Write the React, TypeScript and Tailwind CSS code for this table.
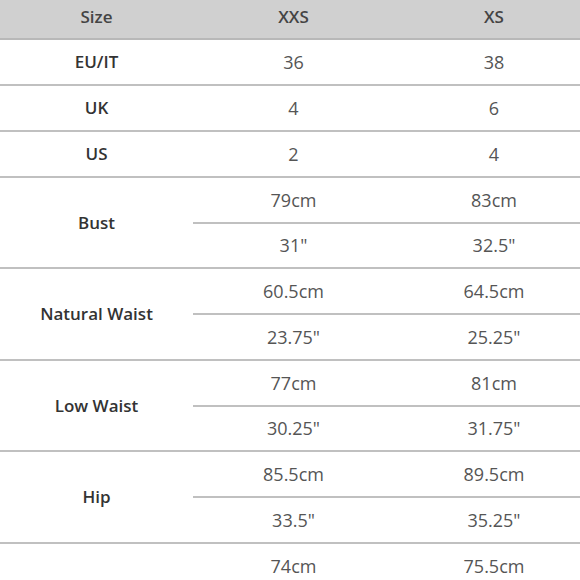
const simpleRows = [
  { label: "EU/IT", xxs: "36", xs: "38" },
  { label: "UK", xxs: "4", xs: "6" },
  { label: "US", xxs: "2", xs: "4" },
];

const measureRows = [
  { label: "Bust", xxs: ["79cm", '31"'], xs: ["83cm", '32.5"'] },
  { label: "Natural Waist", xxs: ["60.5cm", '23.75"'], xs: ["64.5cm", '25.25"'] },
  { label: "Low Waist", xxs: ["77cm", '30.25"'], xs: ["81cm", '31.75"'] },
  { label: "Hip", xxs: ["85.5cm", '33.5"'], xs: ["89.5cm", '35.25"'] },
  { label: "Thigh", xxs: ["74cm", '29"'], xs: ["75.5cm", '29.75"'] },
];

const font = { fontFamily: '"Open Sans", "Liberation Sans", sans-serif' };

export default function App() {
  return (
    <div className="h-[580px] w-[580px] overflow-hidden bg-white" style={font}>
      <div className="w-[594px]">
        {/* Header */}
        <div className="flex h-[40px] items-center border-b-2 border-[#b8b8b8] bg-[#d0d0d0] pb-[4px] text-[17px] font-semibold text-[#444]">
          <div className="w-[193px] text-center">Size</div>
          <div className="w-[201px] text-center">XXS</div>
          <div className="w-[200px] text-center">XS</div>
        </div>

        {simpleRows.map((r) => (
          <div
            key={r.label}
            className="flex h-[46px] items-center border-b-2 border-[#c0c0c0]"
          >
            <div className="w-[193px] text-center text-[17px] font-semibold text-[#333]">{r.label}</div>
            <div className="w-[201px] text-center text-[18px] text-[#555]">{r.xxs}</div>
            <div className="w-[200px] text-center text-[18px] text-[#555]">{r.xs}</div>
          </div>
        ))}

        {measureRows.map((r, i) => (
          <div key={r.label} className="flex border-b-2 border-[#c0c0c0]">
            <div className="flex w-[193px] items-center justify-center text-[17px] font-semibold text-[#333]">
              {r.label}
            </div>
            <div className="flex flex-col text-[18px] text-[#555]">
              <div className="flex h-[46px] items-center border-b-2 border-[#c0c0c0]">
                <div className="w-[201px] text-center">{r.xxs[0]}</div>
                <div className="w-[200px] text-center">{r.xs[0]}</div>
              </div>
              <div className={i % 2 === 0 ? "flex h-[43px] items-center" : "flex h-[44px] items-center"}>
                <div className="w-[201px] text-center">{r.xxs[1]}</div>
                <div className="w-[200px] text-center">{r.xs[1]}</div>
              </div>
            </div>
          </div>
        ))}
      </div>
    </div>
  );
}
